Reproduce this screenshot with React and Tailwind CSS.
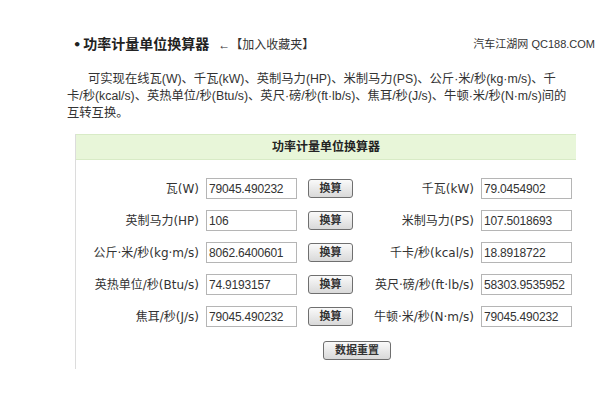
const rows = [
  ["瓦(W)", "79045.490232", "千瓦(kW)", "79.0454902"],
  ["英制马力(HP)", "106", "米制马力(PS)", "107.5018693"],
  ["公斤·米/秒(kg·m/s)", "8062.6400601", "千卡/秒(kcal/s)", "18.8918722"],
  ["英热单位/秒(Btu/s)", "74.9193157", "英尺·磅/秒(ft·lb/s)", "58303.9535952"],
  ["焦耳/秒(J/s)", "79045.490232", "牛顿·米/秒(N·m/s)", "79045.490232"],
];

const font = { fontFamily: '"DejaVu Sans", "Noto Sans CJK SC", sans-serif' };
const cjk = { fontFamily: '"Liberation Sans", "Noto Sans CJK SC", sans-serif' };

function Btn({ children, className = "" }) {
  return (
    <button
      className={`h-[19px] rounded-[3px] border border-[#6f6f6f] bg-gradient-to-b from-[#fafafa] to-[#d9d9d9] text-[11px] font-bold text-[#333] leading-none ${className}`}
      style={cjk}
    >
      {children}
    </button>
  );
}

function Field({ value }) {
  return (
    <input
      readOnly
      value={value}
      className="ml-[7px] h-[21px] w-[91px] border border-[#b5b5b5] bg-white px-[2px] text-[12px] text-[#333] outline-none"
      style={{ fontFamily: '"Liberation Sans", sans-serif', letterSpacing: "-0.2px" }}
    />
  );
}

export default function App() {
  return (
    <div className="h-[400px] w-[600px] bg-white text-[#222]" style={font}>
      <div className="flex items-center pt-[34px] pl-[73px] pr-[5px]">
        <span className="text-[13px] font-bold">•</span>
        <span className="ml-[2px] text-[14px] font-bold" style={cjk}>
          功率计量单位换算器
        </span>
        <span className="ml-[9px] text-[12px] text-[#333]" style={cjk}>
          ←【加入收藏夹】
        </span>
        <span className="ml-auto text-[11px] text-[#333]" style={cjk}>
          汽车江湖网 QC188.COM
        </span>
      </div>

      <div
        className="mt-[16px] pl-[67px] text-[12.3px] leading-[17px] text-[#333] whitespace-nowrap"
        style={cjk}
      >
        <div className="pl-[21px]">
          可实现在线瓦(W)、千瓦(kW)、英制马力(HP)、米制马力(PS)、公斤·米/秒(kg·m/s)、千
        </div>
        <div>卡/秒(kcal/s)、英热单位/秒(Btu/s)、英尺·磅/秒(ft·lb/s)、焦耳/秒(J/s)、牛顿·米/秒(N·m/s)间的</div>
        <div>互转互换。</div>
      </div>

      <div className="ml-[75px] mt-[12px] w-[501px] border-l border-[#dcdcdc] pb-[8px]">
        <div
          className="flex h-[26px] items-center justify-center border-y border-[#d8ebc6] bg-[#e8f6d9] text-[12px] font-bold text-[#222]"
          style={cjk}
        >
          功率计量单位换算器
        </div>

        <div className="mt-[18px] flex flex-col gap-[11px]">
          {rows.map(([l1, v1, l2, v2]) => (
            <div key={l1} className="flex items-center">
              <span className="w-[123px] text-right text-[12px] whitespace-nowrap text-[#333]">{l1}</span>
              <Field value={v1} />
              <Btn className="ml-[11px] w-[45px]">换算</Btn>
              <span className="w-[121px] text-right text-[12px] whitespace-nowrap text-[#333]">{l2}</span>
              <Field value={v2} />
            </div>
          ))}
        </div>

        <div className="mt-[10px] pl-[247px]">
          <Btn className="w-[68px]">数据重置</Btn>
        </div>
      </div>
    </div>
  );
}
